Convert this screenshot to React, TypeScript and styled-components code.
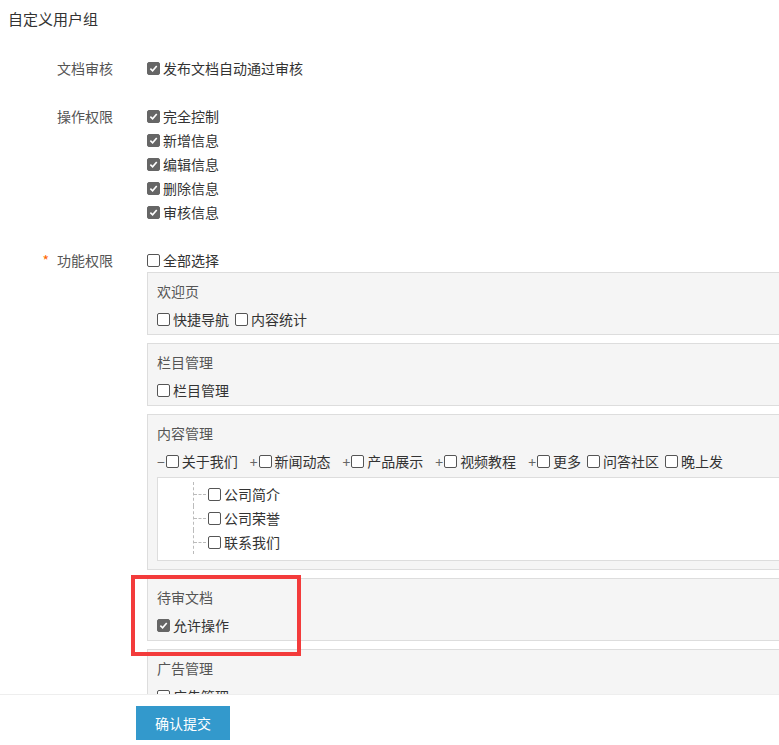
import styled, { createGlobalStyle } from 'styled-components'

const Global = createGlobalStyle`
  html, body { margin: 0; padding: 0; background: #fff; overflow: hidden; }
  body { font-family: "Noto Sans CJK SC", "Liberation Sans", sans-serif; font-size: 14px; color: #333; }
`

const Page = styled.div`
  height: 745px;
  display: flex;
  flex-direction: column;
  position: relative;
  overflow: hidden;
`

const Scroll = styled.div`
  height: 694px;
  flex: none;
  overflow: hidden;
`

const Title = styled.h1`
  margin: 0;
  padding: 8px 8px 0;
  font-size: 15px;
  font-weight: normal;
  line-height: 22px;
`

const Row = styled.div<{ top: number }>`
  display: flex;
  margin-top: ${(p) => p.top}px;
`

const Label = styled.div`
  flex: none;
  width: 147px;
  text-align: right;
  line-height: 24px;
  color: #555;
  padding-right: 34px;
  box-sizing: border-box;
`

const Star = styled.span`
  color: #f60;
  margin-right: 8px;
`

const Content = styled.div`
  flex: none;
  width: 700px;
`

const Check = styled.label`
  display: inline-flex;
  align-items: center;
  gap: 3px;
  line-height: 24px;
  margin-right: 6px;
  white-space: nowrap;
`

const Box = styled.span<{ on?: boolean }>`
  width: 11px;
  height: 11px;
  border-radius: 2px;
  border: 1px solid ${(p) => (p.on ? '#666' : '#555')};
  background: ${(p) => (p.on ? '#666' : '#fff')};
  display: inline-flex;
  align-items: center;
  justify-content: center;
`

const Lines = styled.div`
  display: flex;
  flex-direction: column;
`

const Panel = styled.div`
  background: #f5f5f5;
  border: 1px solid #ddd;
  padding: 7px 9px 3px;
  margin-top: 8px;
  &:first-of-type { margin-top: 0; }
`

const PanelTitle = styled.div`
  line-height: 22px;
  color: #555;
  margin-bottom: 5px;
`

const Sign = styled.span`
  color: #666;
  margin-right: 1px;
  margin-left: 6px;
  &:first-child { margin-left: 0; }
`

const Sub = styled.div`
  background: #fff;
  border: 1px solid #ddd;
  margin-top: 4px;
  margin-bottom: 5px;
  padding: 4px 0 6px 35px;
`

const TreeItem = styled.div`
  display: flex;
  align-items: center;
  border-left: 1px dashed #bbb;
`

const Dash = styled.span`
  width: 12px;
  border-top: 1px dashed #bbb;
  margin-right: 2px;
`

const Footer = styled.div`
  border-top: 1px solid #eee;
  background: #fff;
  padding: 11px 136px 0;
  flex: 1;
`

const Submit = styled.button`
  width: 94px;
  height: 34px;
  border: none;
  background: #3399cc;
  color: #fff;
  font: inherit;
  font-size: 14px;
  padding: 0;
`

const Highlight = styled.div`
  position: absolute;
  left: 131px;
  top: 575px;
  width: 162px;
  height: 73px;
  border: 4px solid #f33b3b;
`

function C({ on, children }: { on?: boolean; children: React.ReactNode }) {
  return (
    <Check>
      <Box on={on}>
        {on && (
          <svg width="9" height="9" viewBox="0 0 10 10">
            <path d="M1.5 5.2 L4 7.6 L8.6 2.2" stroke="#fff" strokeWidth="1.8" fill="none" />
          </svg>
        )}
      </Box>
      {children}
    </Check>
  )
}

export default function App() {
  return (
    <Page>
      <Global />
      <Scroll>
        <Title>自定义用户组</Title>
        <Row top={26}>
          <Label>文档审核</Label>
          <Content><C on>发布文档自动通过审核</C></Content>
        </Row>
        <Row top={24}>
          <Label>操作权限</Label>
          <Content>
            <Lines>
              {['完全控制', '新增信息', '编辑信息', '删除信息', '审核信息'].map((t) => (
                <div key={t}><C on>{t}</C></div>
              ))}
            </Lines>
          </Content>
        </Row>
        <Row top={24}>
          <Label><Star>*</Star>功能权限</Label>
          <Content>
            <C>全部选择</C>
            <div>
              <Panel>
                <PanelTitle>欢迎页</PanelTitle>
                <C>快捷导航</C><C>内容统计</C>
              </Panel>
              <Panel>
                <PanelTitle>栏目管理</PanelTitle>
                <C>栏目管理</C>
              </Panel>
              <Panel>
                <PanelTitle>内容管理</PanelTitle>
                <div>
                  <Sign>−</Sign><C>关于我们</C>
                  <Sign>+</Sign><C>新闻动态</C>
                  <Sign>+</Sign><C>产品展示</C>
                  <Sign>+</Sign><C>视频教程</C>
                  <Sign>+</Sign><C>更多</C>
                  <C>问答社区</C>
                  <C>晚上发</C>
                </div>
                <Sub>
                  {['公司简介', '公司荣誉', '联系我们'].map((t) => (
                    <TreeItem key={t}><Dash /><C>{t}</C></TreeItem>
                  ))}
                </Sub>
              </Panel>
              <Panel>
                <PanelTitle>待审文档</PanelTitle>
                <C on>允许操作</C>
              </Panel>
              <Panel>
                <PanelTitle>广告管理</PanelTitle>
                <C>广告管理</C>
              </Panel>
            </div>
          </Content>
        </Row>
      </Scroll>
      <Footer>
        <Submit>确认提交</Submit>
      </Footer>
      <Highlight />
    </Page>
  )
}
